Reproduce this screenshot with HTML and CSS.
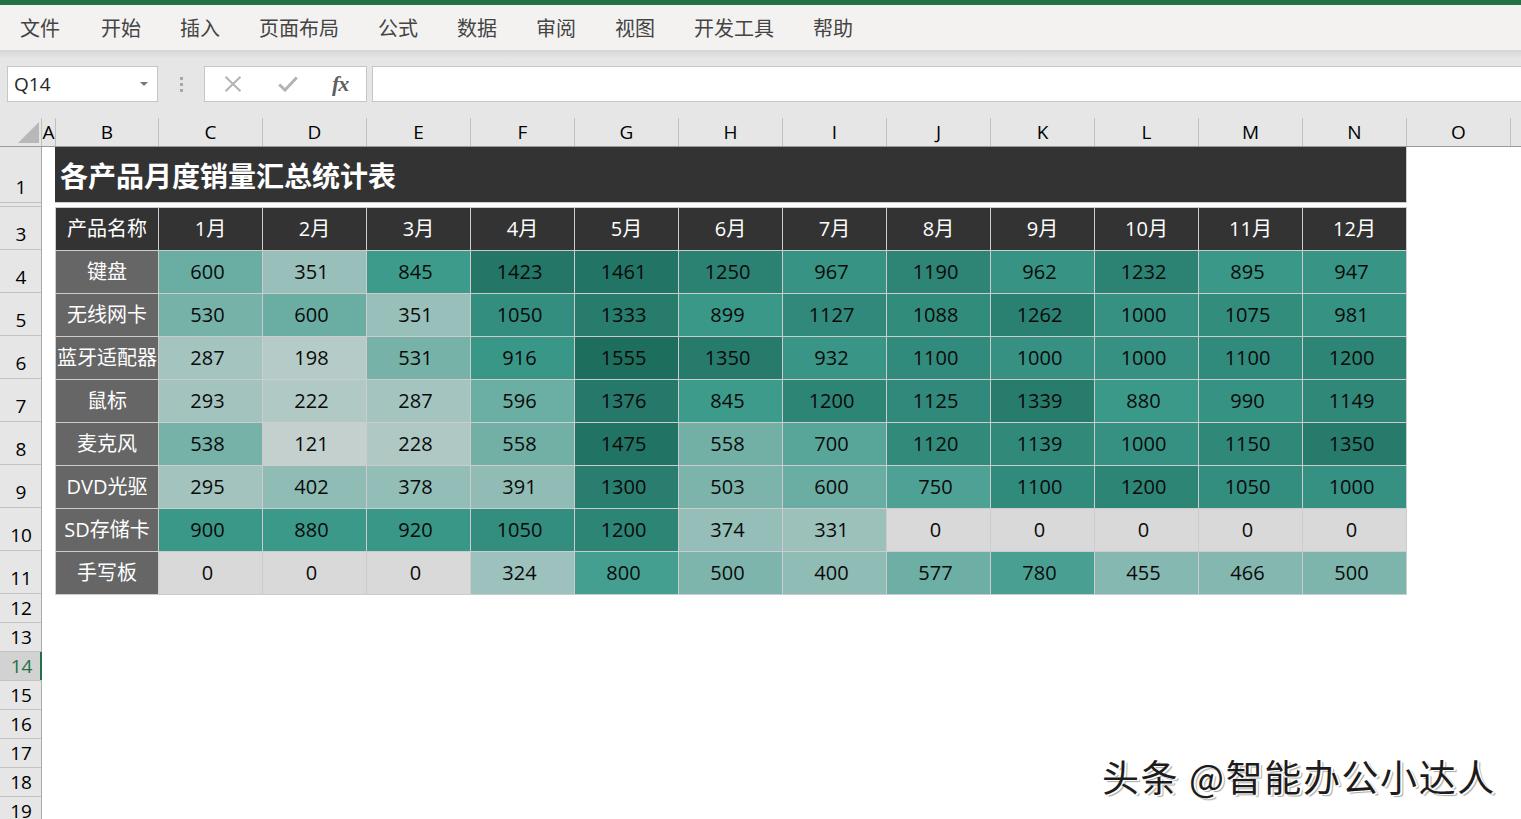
FILE: index.html
```html
<!DOCTYPE html>
<html lang="zh-CN">
<head>
<meta charset="utf-8">
<title>各产品月度销量汇总统计表</title>
<link rel="stylesheet" href="styles.css">
<script src="app.js" defer></script>
</head>
<body>
<div class="app">
  <div class="topline"></div>
  <nav class="menu">
    <span class="mi first">文件</span>
    <span class="mi">开始</span>
    <span class="mi">插入</span>
    <span class="mi">页面布局</span>
    <span class="mi">公式</span>
    <span class="mi">数据</span>
    <span class="mi">审阅</span>
    <span class="mi">视图</span>
    <span class="mi">开发工具</span>
    <span class="mi">帮助</span>
  </nav>
  <div class="toolbar">
    <div class="namebox"><span class="ref">Q14</span><span class="caret"></span></div>
    <div class="dots"><i></i><i></i><i></i></div>
    <div class="fxbox">
      <svg class="ico" width="18" height="16" viewBox="0 0 18 16"><path d="M1.5 0.8 L16.5 15.2 M16.5 0.8 L1.5 15.2" stroke="#b3b3b3" stroke-width="2" fill="none"/></svg>
      <svg class="ico" width="20" height="16" viewBox="0 0 20 16"><path d="M1.2 8.5 L7 14 L18.8 1.5" stroke="#b3b3b3" stroke-width="3" fill="none"/></svg>
      <span class="fx">fx</span>
    </div>
    <div class="formula"></div>
  </div>
  <div class="colheads">
    <div class="corner"><svg width="42" height="28" viewBox="0 0 42 28"><polygon points="39,4 39,25 18,25" fill="#b8b8b8"/></svg></div>
    <div class="ch cha">A</div>
    <div class="ch chb">B</div>
    <div class="ch">C</div>
    <div class="ch">D</div>
    <div class="ch">E</div>
    <div class="ch">F</div>
    <div class="ch">G</div>
    <div class="ch">H</div>
    <div class="ch">I</div>
    <div class="ch">J</div>
    <div class="ch">K</div>
    <div class="ch">L</div>
    <div class="ch">M</div>
    <div class="ch">N</div>
    <div class="ch">O</div>
    <div class="ch chp"></div>
  </div>
  <div class="body">
    <div class="rowheads">
      <div class="rh r1">1</div>
      <div class="rh r2"></div>
      <div class="rh rt">3</div>
      <div class="rh rt">4</div>
      <div class="rh rt">5</div>
      <div class="rh rt">6</div>
      <div class="rh rt">7</div>
      <div class="rh rt">8</div>
      <div class="rh rt">9</div>
      <div class="rh rt">10</div>
      <div class="rh rt">11</div>
      <div class="rh rs">12</div>
      <div class="rh rs">13</div>
      <div class="rh rs sel">14</div>
      <div class="rh rs">15</div>
      <div class="rh rs">16</div>
      <div class="rh rs">17</div>
      <div class="rh rs">18</div>
      <div class="rh rs">19</div>
    </div>
    <div class="sheet">
      <div class="title">各产品月度销量汇总统计表</div>
      <div class="grid">
        <div class="c h">产品名称</div><div class="c h">1月</div><div class="c h">2月</div><div class="c h">3月</div><div class="c h">4月</div><div class="c h">5月</div><div class="c h">6月</div><div class="c h">7月</div><div class="c h">8月</div><div class="c h">9月</div><div class="c h">10月</div><div class="c h">11月</div><div class="c h">12月</div>

        <div class="c l">键盘</div><div class="c v">600</div><div class="c v">351</div><div class="c v">845</div><div class="c v">1423</div><div class="c v">1461</div><div class="c v">1250</div><div class="c v">967</div><div class="c v">1190</div><div class="c v">962</div><div class="c v">1232</div><div class="c v">895</div><div class="c v">947</div>

        <div class="c l">无线网卡</div><div class="c v">530</div><div class="c v">600</div><div class="c v">351</div><div class="c v">1050</div><div class="c v">1333</div><div class="c v">899</div><div class="c v">1127</div><div class="c v">1088</div><div class="c v">1262</div><div class="c v">1000</div><div class="c v">1075</div><div class="c v">981</div>

        <div class="c l">蓝牙适配器</div><div class="c v">287</div><div class="c v">198</div><div class="c v">531</div><div class="c v">916</div><div class="c v">1555</div><div class="c v">1350</div><div class="c v">932</div><div class="c v">1100</div><div class="c v">1000</div><div class="c v">1000</div><div class="c v">1100</div><div class="c v">1200</div>

        <div class="c l">鼠标</div><div class="c v">293</div><div class="c v">222</div><div class="c v">287</div><div class="c v">596</div><div class="c v">1376</div><div class="c v">845</div><div class="c v">1200</div><div class="c v">1125</div><div class="c v">1339</div><div class="c v">880</div><div class="c v">990</div><div class="c v">1149</div>

        <div class="c l">麦克风</div><div class="c v">538</div><div class="c v">121</div><div class="c v">228</div><div class="c v">558</div><div class="c v">1475</div><div class="c v">558</div><div class="c v">700</div><div class="c v">1120</div><div class="c v">1139</div><div class="c v">1000</div><div class="c v">1150</div><div class="c v">1350</div>

        <div class="c l">DVD光驱</div><div class="c v">295</div><div class="c v">402</div><div class="c v">378</div><div class="c v">391</div><div class="c v">1300</div><div class="c v">503</div><div class="c v">600</div><div class="c v">750</div><div class="c v">1100</div><div class="c v">1200</div><div class="c v">1050</div><div class="c v">1000</div>

        <div class="c l">SD存储卡</div><div class="c v">900</div><div class="c v">880</div><div class="c v">920</div><div class="c v">1050</div><div class="c v">1200</div><div class="c v">374</div><div class="c v">331</div><div class="c v">0</div><div class="c v">0</div><div class="c v">0</div><div class="c v">0</div><div class="c v">0</div>

        <div class="c l">手写板</div><div class="c v">0</div><div class="c v">0</div><div class="c v">0</div><div class="c v">324</div><div class="c v">800</div><div class="c v">500</div><div class="c v">400</div><div class="c v">577</div><div class="c v">780</div><div class="c v">455</div><div class="c v">466</div><div class="c v">500</div>
      </div>
    </div>
  </div>
  <div class="watermark">头条 @智能办公小达人</div>
</div>
</body>
</html>
```

FILE: styles.css
```css
html, body {
  margin: 0;
  padding: 0;
  background: #ffffff;
}
body {
  font-family: "Open Sans", "Noto Sans CJK SC", sans-serif;
  overflow: hidden;
}
.app {
  position: relative;
  width: 1521px;
  height: 819px;
  overflow: hidden;
}
.topline {
  height: 5px;
  background: #217346;
}
.menu {
  height: 45px;
  background: #f3f2f1;
  display: flex;
  align-items: center;
  padding-left: 20px;
  gap: 39px;
  font-family: "Noto Sans CJK SC", sans-serif;
  font-size: 20px;
  color: #444444;
}
.menu .first {
  margin-right: 2px;
}
.toolbar {
  height: 68px;
  box-sizing: border-box;
  padding-top: 16px;
  display: flex;
  align-items: flex-start;
  background: linear-gradient(#d5d5d5 0px, #e6e6e6 8px, #e6e6e6 100%);
}
.namebox {
  margin-left: 7px;
  width: 151px;
  height: 36px;
  box-sizing: border-box;
  background: #ffffff;
  border: 1px solid #c6c6c6;
  display: flex;
  align-items: center;
  justify-content: space-between;
  padding: 0 9px 0 6px;
  font-size: 19px;
  color: #262626;
}
.caret {
  width: 0;
  height: 0;
  border-left: 4px solid transparent;
  border-right: 4px solid transparent;
  border-top: 4px solid #767676;
}
.dots {
  width: 46px;
  height: 36px;
  display: flex;
  flex-direction: column;
  align-items: center;
  justify-content: center;
  gap: 3px;
}
.dots i {
  display: block;
  width: 3px;
  height: 3px;
  background: #a8a8a8;
}
.fxbox {
  width: 163px;
  height: 36px;
  box-sizing: border-box;
  background: #ffffff;
  border: 1px solid #c6c6c6;
  display: flex;
  align-items: center;
  padding-left: 19px;
}
.fxbox .ico:nth-child(2) {
  margin-left: 36px;
}
.fx {
  margin-left: 34px;
  font-family: "Liberation Serif", serif;
  font-style: italic;
  font-weight: bold;
  font-size: 22px;
  color: #5f5f5f;
  letter-spacing: -1px;
  line-height: 1;
}
.formula {
  flex: 1;
  margin-left: 5px;
  height: 36px;
  box-sizing: border-box;
  background: #ffffff;
  border: 1px solid #c6c6c6;
  border-right: none;
}
.colheads {
  height: 29px;
  box-sizing: border-box;
  background: #e6e6e6;
  border-bottom: 1px solid #9a9a9a;
  display: flex;
  font-size: 19px;
  color: #000000;
}
.corner {
  width: 42px;
  flex: none;
  box-sizing: border-box;
  border-right: 1px solid #c0c0c0;
  height: 28px;
}
.corner svg {
  display: block;
}
.ch {
  flex: none;
  width: 104px;
  height: 28px;
  box-sizing: border-box;
  border-right: 1px solid #c0c0c0;
  display: flex;
  align-items: center;
  justify-content: center;
  overflow: hidden;
  line-height: 1;
}
.cha {
  width: 14px;
}
.chb {
  width: 103px;
}
.chp {
  width: 20px;
  border-right: none;
}
.body {
  display: flex;
}
.rowheads {
  width: 42px;
  flex: none;
  box-sizing: border-box;
  background: #e6e6e6;
  border-right: 1px solid #ababab;
  font-size: 19px;
  color: #000000;
}
.rh {
  box-sizing: border-box;
  border-bottom: 1px solid #c2c2c2;
  display: flex;
  align-items: flex-end;
  justify-content: center;
  line-height: 19px;
  padding-bottom: 5px;
  padding-left: 1px;
}
.r1 {
  height: 56px;
}
.r2 {
  height: 4px;
  padding: 0;
}
.rt {
  height: 43px;
}
.rs {
  height: 29px;
  padding-bottom: 4px;
}
.rh.sel {
  background: #d2d2d2;
  color: #217346;
  box-shadow: inset -2px 0 0 #217346;
  margin-right: -1px;
}
.sheet {
  padding-left: 13px;
}
.title {
  width: 1352px;
  height: 56px;
  box-sizing: border-box;
  background: #333333;
  border-right: 1px solid #cccccc;
  border-bottom: 1px solid #cccccc;
  margin-bottom: 4px;
  padding-left: 5px;
  display: flex;
  align-items: center;
  font-family: "Noto Sans CJK SC", sans-serif;
  font-weight: bold;
  font-size: 28px;
  color: #ffffff;
  letter-spacing: 0;
}
.grid {
  display: grid;
  grid-template-columns: 102px repeat(12, 103px);
  grid-auto-rows: 42px;
  gap: 1px;
  padding: 1px;
  width: max-content;
  background: #cccccc;
}
.c {
  display: flex;
  align-items: center;
  justify-content: center;
  font-size: 20px;
  line-height: 1;
  white-space: nowrap;
  overflow: hidden;
}
.c.h {
  background: #333333;
  color: #ffffff;
}
.c.l {
  background: #666666;
  color: #ffffff;
}
.c.v {
  background: #d9d9d9;
  color: #0a0a0a;
  padding-right: 6px;
  box-sizing: border-box;
}
.watermark {
  position: absolute;
  left: 1102px;
  top: 752px;
  font-family: "Noto Sans CJK SC", sans-serif;
  font-size: 37px;
  line-height: 48px;
  letter-spacing: 1.6px;
  color: #1c1c1c;
  text-shadow: 2px 1px 0 #ffffff, 3px 2px 1px rgba(0, 0, 0, 0.35);
  white-space: nowrap;
}
```

FILE: app.js
```js
(function () {
  var minC = [217, 217, 217];
  var midC = [60, 155, 140];
  var maxC = [30, 110, 94];
  var mid = 850;
  var max = 1555;
  function mix(a, b, t) {
    return [0, 1, 2].map(function (i) {
      return Math.round(a[i] + (b[i] - a[i]) * t);
    });
  }
  function colorFor(v) {
    var c;
    if (v <= mid) {
      c = mix(minC, midC, v / mid);
    } else {
      c = mix(midC, maxC, (v - mid) / (max - mid));
    }
    return "rgb(" + c.join(",") + ")";
  }
  var cells = document.querySelectorAll(".c.v");
  for (var i = 0; i < cells.length; i++) {
    var v = parseFloat(cells[i].textContent);
    cells[i].style.background = colorFor(v);
  }
})();
```
